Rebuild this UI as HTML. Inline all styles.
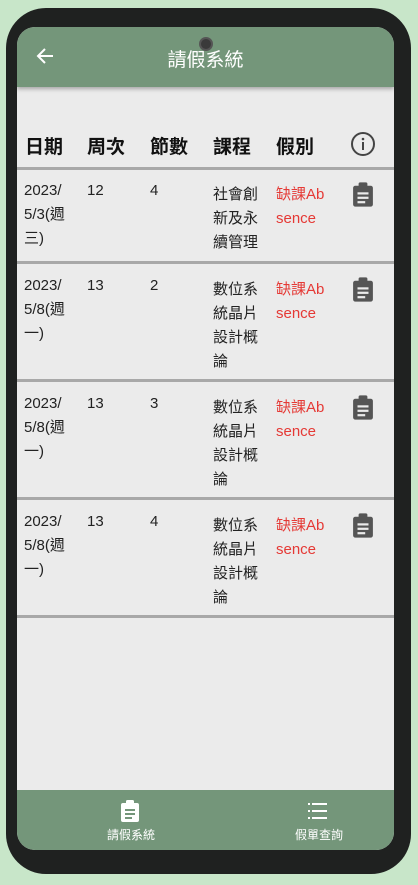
<!DOCTYPE html><html><head><meta charset="utf-8"><style>
body{margin:0;width:418px;height:885px;background:#c8e6c9;position:relative;overflow:hidden;font-family:"Liberation Sans","Noto Sans CJK TC",sans-serif}
.phone{position:absolute;left:6px;top:8px;width:405px;height:866px;background:#1f2120;border-radius:40px}
.screen{position:absolute;left:17px;top:27px;width:377px;height:823px;background:#ebebeb;border-radius:18px;overflow:hidden}
.hdr{position:absolute;left:0;top:0;width:377px;height:60px;background:#74967a;box-shadow:0 2px 4px rgba(0,0,0,.3)}
.title{position:absolute;left:0;width:377px;top:18px;text-align:center;color:#fff;font-size:19px}
.cam{position:absolute;left:199px;top:37px;width:14px;height:14px;border-radius:50%;background:#3a3a3a;border:2px solid #555;box-sizing:border-box}
.th{position:absolute;top:105px;font-size:19px;font-weight:bold;color:#111}
.line{position:absolute;left:0;width:377px;height:3px;background:#a8a8a8}
.c{position:absolute;font-size:15px;line-height:24px;color:#222}
.r{color:#e53935}
.nav{position:absolute;left:0;top:763px;width:377px;height:60px;background:#74967a}
.nl{position:absolute;top:36px;color:#fff;font-size:12px}
</style></head><body>
<div class="phone"></div>
<div class="screen">
<div class="hdr"><svg style="position:absolute;left:19px;top:20px" width="18" height="18" viewBox="0 0 18 18"><path d="M17 9H2M9 2L2 9l7 7" stroke="#fff" stroke-width="2" fill="none"/></svg><div class="title">請假系統</div></div>
<div class="th" style="left:8px">日期</div><div class="th" style="left:70px">周次</div><div class="th" style="left:133px">節數</div><div class="th" style="left:196px">課程</div><div class="th" style="left:259px">假別</div>
<svg style="position:absolute;left:333px;top:104px" width="26" height="26" viewBox="0 0 26 26"><circle cx="13" cy="13" r="11" stroke="#444" stroke-width="2" fill="none"/><rect x="12" y="11" width="2" height="8" fill="#444"/><circle cx="13" cy="8" r="1.3" fill="#444"/></svg>
<div class="line" style="top:140px"></div>
<div class="line" style="top:234px"></div>
<div class="line" style="top:352px"></div>
<div class="line" style="top:470px"></div>
<div class="line" style="top:588px"></div>
<div id="rows"></div>
<div class="nav">
<svg style="position:absolute;left:103px;top:10px" width="20" height="22" viewBox="0 0 20 22"><rect x="1" y="3" width="18" height="19" rx="2" fill="#fff"/><rect x="6" y="0" width="8" height="5" rx="1.5" fill="#fff"/><rect x="5" y="9" width="10" height="2" fill="#74967a"/><rect x="5" y="13" width="10" height="2" fill="#74967a"/><rect x="5" y="17" width="7" height="2" fill="#74967a"/></svg>
<div class="nl" style="left:90px">請假系統</div>
<svg style="position:absolute;left:291px;top:12px" width="20" height="18" viewBox="0 0 20 18"><g fill="#fff"><rect x="0" y="1" width="2" height="2"/><rect x="0" y="8" width="2" height="2"/><rect x="0" y="15" width="2" height="2"/><rect x="4" y="1" width="15" height="2"/><rect x="4" y="8" width="15" height="2"/><rect x="4" y="15" width="15" height="2"/></g></svg>
<div class="nl" style="left:278px">假單查詢</div>
</div>
</div>
<script>
var d=[[179,"2023/<br>5/3(週<br>三)","12","4","社會創<br>新及永<br>續管理"],[274,"2023/<br>5/8(週<br>一)","13","2","數位系<br>統晶片<br>設計概<br>論"],[392,"2023/<br>5/8(週<br>一)","13","3","數位系<br>統晶片<br>設計概<br>論"],[510,"2023/<br>5/8(週<br>一)","13","4","數位系<br>統晶片<br>設計概<br>論"]];
var h="";d.forEach(function(r){var t=r[0]-27;
h+='<div class="c" style="left:7px;top:'+t+'px">'+r[1]+'</div><div class="c" style="left:70px;top:'+t+'px">'+r[2]+'</div><div class="c" style="left:133px;top:'+t+'px">'+r[3]+'</div><div class="c" style="left:196px;top:'+(t+4)+'px">'+r[4]+'</div><div class="c r" style="left:259px;top:'+(t+4)+'px">缺課Ab<br>sence</div>';
h+='<svg style="position:absolute;left:335px;top:'+(t+3)+'px" width="22" height="25" viewBox="0 0 20 22"><rect x="1" y="3" width="18" height="19" rx="2" fill="#555"/><rect x="6" y="0" width="8" height="5" rx="1.5" fill="#555"/><rect x="5" y="9" width="10" height="2" fill="#ebebeb"/><rect x="5" y="13" width="10" height="2" fill="#ebebeb"/><rect x="5" y="17" width="7" height="2" fill="#ebebeb"/></svg>';});
document.getElementById("rows").innerHTML=h;
</script>
<div class="cam"></div>
</body></html>
